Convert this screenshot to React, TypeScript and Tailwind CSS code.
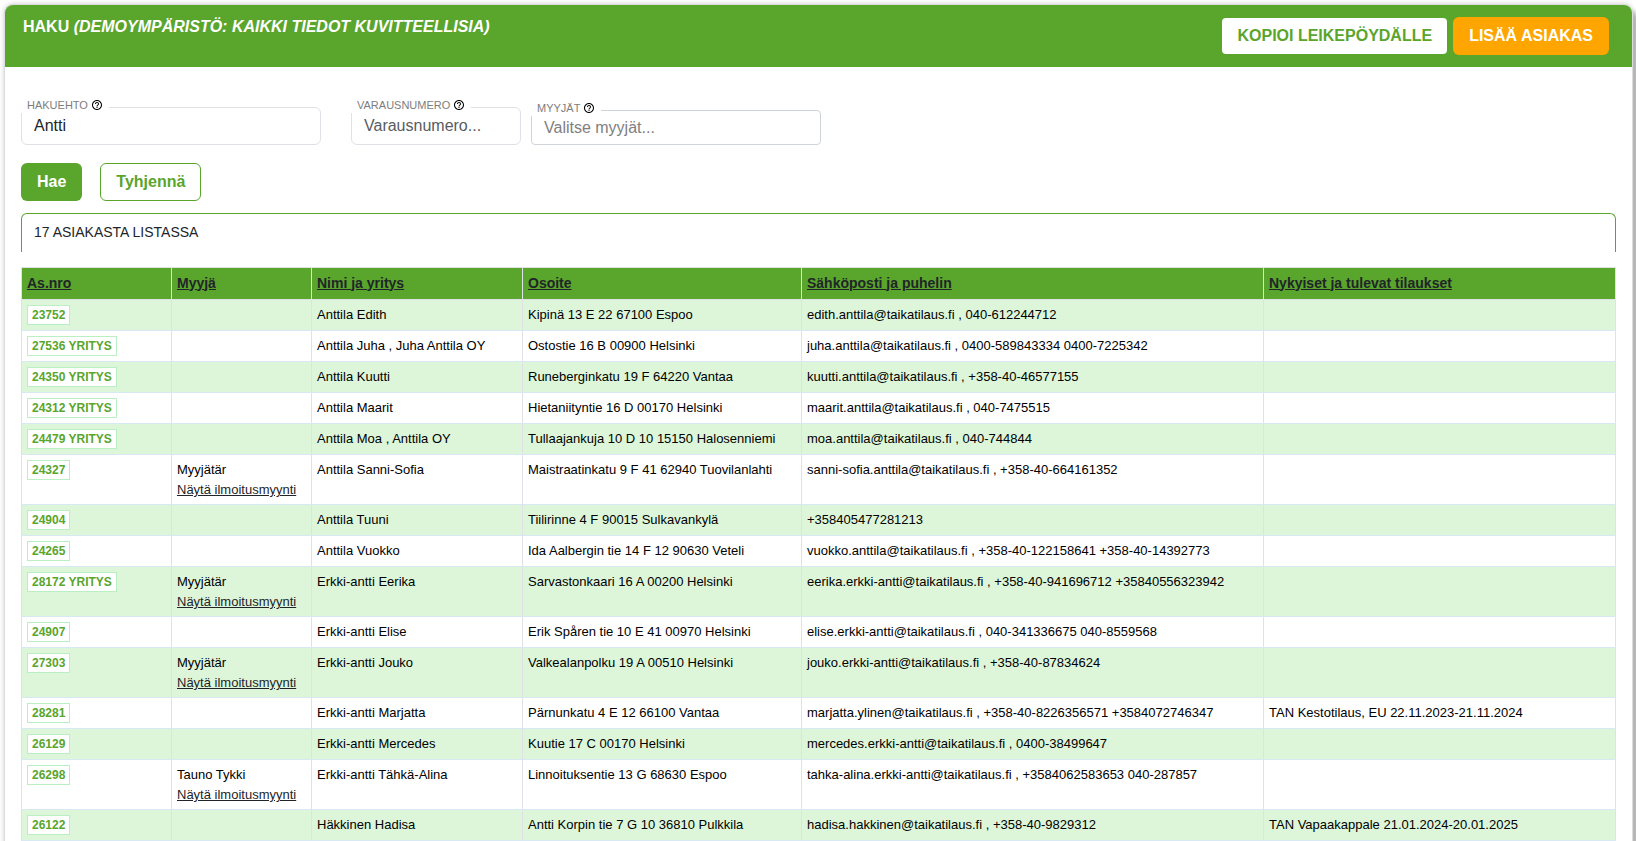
import { useState, type ReactNode } from "react";
import { MdHelpOutline } from "react-icons/md";

type Customer = {
  id: string;
  company?: boolean;
  seller?: string;
  name: string;
  address: string;
  contact: string;
  orders?: string;
};

const customers: Customer[] = [
  { id: "23752", name: "Anttila Edith", address: "Kipinä 13 E 22 67100 Espoo", contact: "edith.anttila@taikatilaus.fi , 040-612244712" },
  { id: "27536", company: true, name: "Anttila Juha , Juha Anttila OY", address: "Ostostie 16 B 00900 Helsinki", contact: "juha.anttila@taikatilaus.fi , 0400-589843334 0400-7225342" },
  { id: "24350", company: true, name: "Anttila Kuutti", address: "Runeberginkatu 19 F 64220 Vantaa", contact: "kuutti.anttila@taikatilaus.fi , +358-40-46577155" },
  { id: "24312", company: true, name: "Anttila Maarit", address: "Hietaniityntie 16 D 00170 Helsinki", contact: "maarit.anttila@taikatilaus.fi , 040-7475515" },
  { id: "24479", company: true, name: "Anttila Moa , Anttila OY", address: "Tullaajankuja 10 D 10 15150 Halosenniemi", contact: "moa.anttila@taikatilaus.fi , 040-744844" },
  { id: "24327", seller: "Myyjätär", name: "Anttila Sanni-Sofia", address: "Maistraatinkatu 9 F 41 62940 Tuovilanlahti", contact: "sanni-sofia.anttila@taikatilaus.fi , +358-40-664161352" },
  { id: "24904", name: "Anttila Tuuni", address: "Tiilirinne 4 F 90015 Sulkavankylä", contact: "+358405477281213" },
  { id: "24265", name: "Anttila Vuokko", address: "Ida Aalbergin tie 14 F 12 90630 Veteli", contact: "vuokko.anttila@taikatilaus.fi , +358-40-122158641 +358-40-14392773" },
  { id: "28172", company: true, seller: "Myyjätär", name: "Erkki-antti Eerika", address: "Sarvastonkaari 16 A 00200 Helsinki", contact: "eerika.erkki-antti@taikatilaus.fi , +358-40-941696712 +35840556323942" },
  { id: "24907", name: "Erkki-antti Elise", address: "Erik Spåren tie 10 E 41 00970 Helsinki", contact: "elise.erkki-antti@taikatilaus.fi , 040-341336675 040-8559568" },
  { id: "27303", seller: "Myyjätär", name: "Erkki-antti Jouko", address: "Valkealanpolku 19 A 00510 Helsinki", contact: "jouko.erkki-antti@taikatilaus.fi , +358-40-87834624" },
  { id: "28281", name: "Erkki-antti Marjatta", address: "Pärnunkatu 4 E 12 66100 Vantaa", contact: "marjatta.ylinen@taikatilaus.fi , +358-40-8226356571 +3584072746347", orders: "TAN Kestotilaus, EU 22.11.2023-21.11.2024" },
  { id: "26129", name: "Erkki-antti Mercedes", address: "Kuutie 17 C 00170 Helsinki", contact: "mercedes.erkki-antti@taikatilaus.fi , 0400-38499647" },
  { id: "26298", seller: "Tauno Tykki", name: "Erkki-antti Tähkä-Alina", address: "Linnoituksentie 13 G 68630 Espoo", contact: "tahka-alina.erkki-antti@taikatilaus.fi , +3584062583653 040-287857" },
  { id: "26122", name: "Häkkinen Hadisa", address: "Antti Korpin tie 7 G 10 36810 Pulkkila", contact: "hadisa.hakkinen@taikatilaus.fi , +358-40-9829312", orders: "TAN Vapaakappale 21.01.2024-20.01.2025" },
];

const columns = ["As.nro", "Myyjä", "Nimi ja yritys", "Osoite", "Sähköposti ja puhelin", "Nykyiset ja tulevat tilaukset"];

function Field({ id, label, className, children }: { id: string; label: string; className: string; children: ReactNode }) {
  return (
    <div className={`relative ${className}`}>
      <label
        htmlFor={id}
        className="absolute -top-[10px] left-0 flex h-4 items-center gap-[3px] bg-white pr-[6px] pl-[6px] text-[11px] leading-4 text-[#7d7d7d]"
      >
        {label}
        <MdHelpOutline className="size-3 text-black" aria-hidden="true" />
      </label>
      {children}
    </div>
  );
}

function CustomerRow({ customer }: { customer: Customer }) {
  const cell = "border border-x-[#dee2e6] border-y-[#d9e9f3] px-[5px] pt-[5px] pb-1 align-top";
  return (
    <tr className="odd:bg-[#ddf6da] even:bg-white">
      <td className={cell}>
        <a
          href={`#${customer.id}`}
          className="mb-px inline-block border border-[#b9efc2] bg-white px-1 align-top text-xs leading-[18px] font-bold text-[#5aa52c]"
        >
          {customer.company ? `${customer.id} YRITYS` : customer.id}
        </a>
      </td>
      <td className={cell}>
        {customer.seller && (
          <>
            <div>{customer.seller}</div>
            <a href={`#myynti-${customer.id}`} className="block text-[#212529] underline">
              Näytä ilmoitusmyynti
            </a>
          </>
        )}
      </td>
      <td className={cell}>{customer.name}</td>
      <td className={cell}>{customer.address}</td>
      <td className={cell}>{customer.contact}</td>
      <td className={cell}>{customer.orders}</td>
    </tr>
  );
}

export default function App() {
  const [term, setTerm] = useState("Antti");
  const [booking, setBooking] = useState("");
  const [sellers, setSellers] = useState("");

  return (
    <div className="h-screen overflow-hidden bg-white pt-[5px] pr-1 pl-[5px] font-['Liberation_Sans',Arial,sans-serif] text-[#212529]">
      <main className="min-h-screen rounded-t-lg bg-white shadow-[0_0_0_1px_#dcdcdc,0_0_5px_1px_#cccccc,6px_6px_4px_#aaaaaa]">
        <header className="flex items-start justify-between rounded-t-lg bg-[#5aa52c] pt-3 pr-[23px] pb-3 pl-[18px] text-white">
          <h1 className="-mt-0.5 text-base leading-6 font-bold">
            HAKU <em>(DEMOYMPÄRISTÖ: KAIKKI TIEDOT KUVITTEELLISIA)</em>
          </h1>
          <div className="flex items-center gap-[6px]">
            <button type="button" className="h-9 rounded bg-white px-[15px] text-base font-bold text-[#5aa52c]">
              KOPIOI LEIKEPÖYDÄLLE
            </button>
            <button type="button" className="h-[38px] rounded-md bg-[#ffa500] px-4 text-base font-bold text-white">
              LISÄÄ ASIAKAS
            </button>
          </div>
        </header>

        <div className="px-4 pt-10">
          <form onSubmit={(e) => e.preventDefault()}>
            <div className="flex items-end">
              <Field id="term" label="HAKUEHTO" className="w-[300px]">
                <input
                  id="term"
                  value={term}
                  onChange={(e) => setTerm(e.target.value)}
                  className="block h-[38px] w-full rounded-md border border-[#dee2e6] px-3 text-base text-[#212529] outline-none"
                />
              </Field>
              <Field id="booking" label="VARAUSNUMERO" className="ml-[30px] w-[170px]">
                <input
                  id="booking"
                  value={booking}
                  placeholder="Varausnumero..."
                  onChange={(e) => setBooking(e.target.value)}
                  className="block h-[38px] w-full rounded-md border border-[#dee2e6] px-3 text-base outline-none placeholder:text-[#595c5f]"
                />
              </Field>
              <Field id="sellers" label="MYYJÄT" className="ml-[10px] w-[290px]">
                <input
                  id="sellers"
                  value={sellers}
                  placeholder="Valitse myyjät..."
                  onChange={(e) => setSellers(e.target.value)}
                  className="block h-[35px] w-full rounded border border-[#ced4da] px-3 text-base outline-none placeholder:text-[#808080]"
                />
              </Field>
            </div>
            <div className="mt-[18px] flex gap-[18px]">
              <button type="submit" className="h-[38px] rounded-md bg-[#5aa52c] px-4 text-base font-bold text-white">
                Hae
              </button>
              <button type="reset" className="h-[38px] rounded-md border border-[#5aa52c] bg-white px-[15px] text-base font-bold text-[#5aa52c]">
                Tyhjennä
              </button>
            </div>
          </form>

          <p className="mt-3 h-[39px] rounded-t-md border border-b-0 border-[#5aa52c] px-3 pt-2 text-sm leading-5">
            17 ASIAKASTA LISTASSA
          </p>

          <table className="mt-[15px] w-full table-fixed border-collapse text-[13px] leading-5 text-black">
            <colgroup>
              <col className="w-[150px]" />
              <col className="w-[140px]" />
              <col className="w-[211px]" />
              <col className="w-[279px]" />
              <col className="w-[462px]" />
              <col />
            </colgroup>
            <thead>
              <tr className="h-8 bg-[#5aa52c]">
                {columns.map((column) => (
                  <th key={column} scope="col" className="border border-[#dee2e6] px-[5px] pb-0.5 text-left text-sm leading-5 font-bold">
                    <a href="#sort" className="text-[#212529] underline">
                      {column}
                    </a>
                  </th>
                ))}
              </tr>
            </thead>
            <tbody>
              {customers.map((customer) => (
                <CustomerRow key={customer.id} customer={customer} />
              ))}
            </tbody>
          </table>
        </div>
      </main>
    </div>
  );
}
